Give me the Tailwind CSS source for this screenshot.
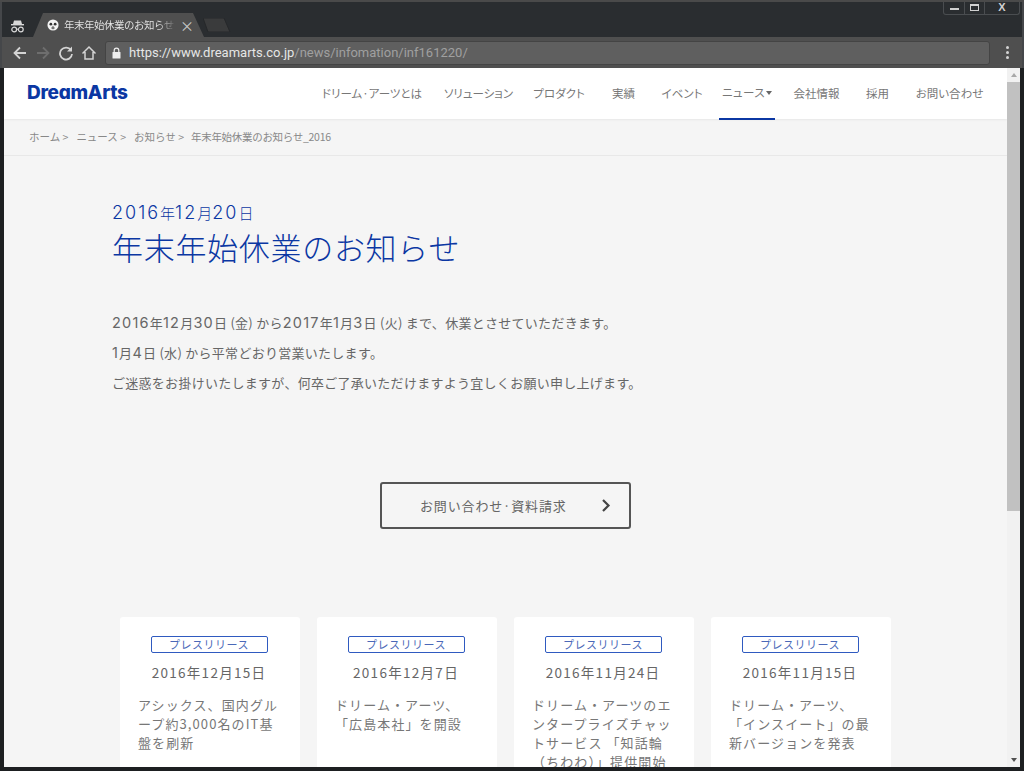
<!DOCTYPE html>
<html lang="ja">
<head>
<meta charset="utf-8">
<script src="https://cdn.jsdelivr.net/npm/@tailwindcss/browser@4"></script>
</head>
<body class="m-0 overflow-hidden">
<div class="w-[1024px] h-[771px] overflow-hidden flex flex-col bg-[#1d1f21] border-t-2 border-[#4a4a4a] font-['Noto_Sans_CJK_JP',sans-serif]">
  <!-- tab strip -->
  <div class="h-[35px] shrink-0 bg-[#2a2d30] border-x-2 border-[#45474a] flex items-end relative">
    <div class="w-[30px] h-[33px] flex items-center justify-center pl-[1px] pt-[10px]">
      <svg width="15" height="14" viewBox="0 0 15 14" fill="none"><path d="M4 1.5h7l1 3.5H3z" fill="#d8d8d8"/><rect x="1" y="5" width="13" height="1.4" fill="#d8d8d8"/><circle cx="4.2" cy="10.5" r="2.4" stroke="#d8d8d8" stroke-width="1.2"/><circle cx="10.8" cy="10.5" r="2.4" stroke="#d8d8d8" stroke-width="1.2"/><path d="M6.6 10.2h1.8" stroke="#d8d8d8"/></svg>
    </div>
    <div class="relative w-[170px] h-[24px] flex items-center text-[10.5px] text-[#e8e8e8] pl-[12px] ml-[3px]">
      <svg class="absolute left-[-7px] top-0" width="184" height="24" viewBox="0 0 184 24"><path d="M5 24L15 0H165L176 24z" fill="#4f4f4f"/></svg>
      <svg class="relative shrink-0" width="12" height="12" viewBox="0 0 14 14"><circle cx="7" cy="7" r="6.5" fill="#f4f4f4"/><circle cx="4.5" cy="6" r="1.6" fill="#333"/><circle cx="9.5" cy="6" r="1.6" fill="#333"/><path d="M5 10.5h4M7 8v4" stroke="#333" stroke-width="1"/></svg>
      <span class="relative ml-[5px] w-[110px] overflow-hidden whitespace-nowrap tracking-[-0.5px] bg-clip-text text-transparent bg-gradient-to-r from-[#e8e8e8] from-85% to-[#6a6a6a]">年末年始休業のお知らせ</span>
      <span class="relative ml-[6px] text-[14px] leading-none text-[#c8c8c8]">×</span>
    </div>
    <svg class="ml-[-2px] mb-[5px]" width="28" height="14" viewBox="0 0 28 14"><path d="M0 0H21L27 14H5z" fill="#3a3b3c" stroke="#26282a"/></svg>
    <div class="absolute right-[2px] top-[-2px] w-[77px] h-[15px] flex border border-t-0 border-[#4a4d50] rounded-b-[3px] bg-[#2a2d30]">
      <div class="w-[21px] border-r border-[#4a4d50] flex items-center justify-center pt-[3px]"><div class="w-[9px] h-[2px] bg-[#d0d0d0]"></div></div>
      <div class="w-[20px] border-r border-[#4a4d50] flex items-center justify-center"><div class="w-[9px] h-[7px] border border-t-2 border-[#d0d0d0]"></div></div>
      <div class="flex-1 flex items-center justify-center text-[11px] font-bold leading-none text-[#d0d0d0] font-['Liberation_Sans',sans-serif]">X</div>
    </div>
  </div>
  <!-- toolbar -->
  <div class="h-[31px] shrink-0 bg-[#4f4f4f] border-x-2 border-[#45474a] flex items-center">
    <div class="w-[100px] flex items-center pl-[10px] gap-[7px]">
      <svg width="16" height="16" viewBox="0 0 16 16" fill="none" stroke="#d4d4d4" stroke-width="1.8"><path d="M14 8H2.5M8 2.5L2.5 8L8 13.5"/></svg>
      <svg width="16" height="16" viewBox="0 0 16 16" fill="none" stroke="#6e6e6e" stroke-width="1.8"><path d="M2 8h11.5M8 2.5L13.5 8L8 13.5"/></svg>
      <svg width="16" height="16" viewBox="0 0 16 16" fill="none" stroke="#d4d4d4" stroke-width="1.8"><path d="M13 5.2A6 6 0 1 0 14 9"/><path d="M14 1.5v5h-5" fill="#d4d4d4" stroke="none"/></svg>
      <svg width="16" height="16" viewBox="0 0 16 16" fill="none" stroke="#d4d4d4" stroke-width="1.5"><path d="M1.5 8.5L8 2l6.5 6.5M4 7v7h8V7"/></svg>
    </div>
    <div class="ml-[3px] w-[885px] h-[24px] rounded-[3px] bg-[#5f5f5f] border border-[#444] flex items-center pl-[5px] text-[13px] whitespace-nowrap font-['Roboto',sans-serif]">
      <svg class="mr-[7px]" width="11" height="12" viewBox="0 0 11 12"><rect x="1.5" y="5" width="8" height="6.5" rx="0.5" fill="#eee"/><path d="M3.2 5V3.5a2.3 2.3 0 0 1 4.6 0V5" fill="none" stroke="#eee" stroke-width="1.2"/></svg>
      <span class="text-[#e6e6e6]">https://www.dreamarts.co.jp</span><span class="text-[#a0a0a0]">/news/infomation/inf161220/</span>
    </div>
    <div class="ml-[16px] flex flex-col gap-[2px]">
      <div class="w-[3px] h-[3px] rounded-full bg-[#d4d4d4]"></div><div class="w-[3px] h-[3px] rounded-full bg-[#d4d4d4]"></div><div class="w-[3px] h-[3px] rounded-full bg-[#d4d4d4]"></div>
    </div>
  </div>
  <!-- viewport -->
  <div class="flex-1 min-h-0 flex ml-[4px] mr-[4px] mb-[4px] bg-[#f5f5f5] overflow-hidden">
    <main class="w-[1003px] shrink-0 overflow-hidden flex flex-col">
      <header class="h-[51px] shrink-0 bg-white flex items-center justify-between pl-[23px] shadow-[0_1px_2px_rgba(0,0,0,0.06)] relative">
        <div class="text-[#0b37a3] text-[19px] font-extrabold tracking-[-0.3px] leading-none font-['Inter',sans-serif] [font-feature-settings:'cv11'] -mt-[2px]">DreamArts</div>
        <nav class="flex items-center h-full text-[11.5px] text-[#777] whitespace-nowrap [font-feature-settings:'palt'] mr-[5px]">
          <a class="w-[118px] text-center">ドリーム·アーツとは</a>
          <a class="w-[95px] text-center">ソリューション</a>
          <a class="w-[66px] text-center">プロダクト</a>
          <a class="w-[63px] text-center">実績</a>
          <a class="w-[54px] text-center">イベント</a>
          <a class="ml-[10px] w-[56px] h-full flex items-center justify-center border-b-[2px] border-[#0b37a3] mt-[1px] tracking-[0.4px]">ニュース<span class="ml-[1px] w-0 h-0 border-x-[3px] border-x-transparent border-t-[4px] border-t-[#666]"></span></a>
          <a class="w-[83px] text-center">会社情報</a>
          <a class="w-[39px] text-center">採用</a>
          <a class="w-[105px] text-center">お問い合わせ</a>
        </nav>
      </header>
      <div class="h-[37px] shrink-0 border-b border-[#e8e8e8] flex items-center pl-[25px] text-[10.5px] text-[#888] whitespace-nowrap gap-[5px]">
        <span>ホーム &gt;</span><span class="ml-[3px]">ニュース &gt;</span><span class="ml-[3px]">お知らせ &gt;</span><span class="ml-[2px] tracking-[-0.3px]">年末年始休業のお知らせ_2016</span>
      </div>
      <section class="pl-[108px] pt-[45px] text-[#0b37a3]">
        <p class="text-[15px] leading-[24px] font-light whitespace-nowrap"><span class="font-['Inter'] text-[18px] tracking-[2px]">2016</span>年<span class="font-['Inter'] text-[18px] tracking-[2px]">12</span>月<span class="font-['Inter'] text-[18px] tracking-[2px]">20</span>日</p>
        <h1 class="text-[31px] leading-[44px] font-light tracking-[0.7px]">年末年始休業のお知らせ</h1>
      </section>
      <section class="pl-[108px] pt-[39px] text-[13px] leading-[30px] text-[#666] tracking-[0.28px] whitespace-nowrap">
        <p><span class="font-['Inter'] text-[14.5px] tracking-[1.2px]">2016</span>年<span class="font-['Inter'] text-[14.5px] tracking-[1.2px]">12</span>月<span class="font-['Inter'] text-[14.5px] tracking-[1.2px]">30</span>日 (金) から<span class="font-['Inter'] text-[14.5px] tracking-[1.2px]">2017</span>年<span class="font-['Inter'] text-[14.5px] tracking-[1.2px]">1</span>月<span class="font-['Inter'] text-[14.5px] tracking-[1.2px]">3</span>日 (火) まで、休業とさせていただきます。</p>
        <p><span class="font-['Inter'] text-[14.5px] tracking-[1.2px]">1</span>月<span class="font-['Inter'] text-[14.5px] tracking-[1.2px]">4</span>日 (水) から平常どおり営業いたします。</p>
        <p>ご迷惑をお掛けいたしますが、何卒ご了承いただけますよう宜しくお願い申し上げます。</p>
      </section>
      <div class="pl-[376px] pt-[84px]">
        <a class="w-[251px] h-[47px] border-2 border-[#555] rounded-[3px] flex items-center text-[13px] tracking-[0.85px] text-[#666] pl-[38px] relative">お問い合わせ·資料請求
          <svg class="absolute right-[18px] top-[14px]" width="10" height="15" viewBox="0 0 10 15" fill="none" stroke="#444" stroke-width="2.2"><path d="M2 2l5.5 5.5L2 13"/></svg>
        </a>
      </div>
      <section class="pl-[116px] pt-[88px] flex gap-[17px] items-start">
        <article class="w-[180px] h-[200px] shrink-0 bg-white rounded-[3px] pt-[19px] pl-[18px] pr-[20px] text-[#777]">
          <div class="w-[117px] mx-auto h-[17px] border border-[#2f5ac0] rounded-[2px] text-[11px] leading-[15px] text-center text-[#4a68b8] tracking-[0.5px] mb-[10px]">プレスリリース</div>
          <p class="text-center text-[13.5px] leading-[19px] tracking-[1.3px] text-[#666] whitespace-nowrap">2016年12月15日</p>
          <p class="text-[13px] leading-[19px] mt-[13px] tracking-[1.1px]">アシックス、国内グループ約3,000名のIT基盤を刷新</p>
        </article>
        <article class="w-[180px] h-[200px] shrink-0 bg-white rounded-[3px] pt-[19px] pl-[18px] pr-[20px] text-[#777]">
          <div class="w-[117px] mx-auto h-[17px] border border-[#2f5ac0] rounded-[2px] text-[11px] leading-[15px] text-center text-[#4a68b8] tracking-[0.5px] mb-[10px]">プレスリリース</div>
          <p class="text-center text-[13.5px] leading-[19px] tracking-[1.3px] text-[#666] whitespace-nowrap">2016年12月7日</p>
          <p class="text-[13px] leading-[19px] mt-[13px] tracking-[1.1px]">ドリーム・アーツ、<br>「広島本社」を開設</p>
        </article>
        <article class="w-[180px] h-[200px] shrink-0 bg-white rounded-[3px] pt-[19px] pl-[18px] pr-[20px] text-[#777]">
          <div class="w-[117px] mx-auto h-[17px] border border-[#2f5ac0] rounded-[2px] text-[11px] leading-[15px] text-center text-[#4a68b8] tracking-[0.5px] mb-[10px]">プレスリリース</div>
          <p class="text-center text-[13.5px] leading-[19px] tracking-[1.3px] text-[#666] whitespace-nowrap">2016年11月24日</p>
          <p class="text-[13px] leading-[19px] mt-[13px] tracking-[1.1px]">ドリーム・アーツのエンタープライズチャットサービス 「知話輪（ちわわ）」提供開始</p>
        </article>
        <article class="w-[180px] h-[200px] shrink-0 bg-white rounded-[3px] pt-[19px] pl-[18px] pr-[20px] text-[#777]">
          <div class="w-[117px] mx-auto h-[17px] border border-[#2f5ac0] rounded-[2px] text-[11px] leading-[15px] text-center text-[#4a68b8] tracking-[0.5px] mb-[10px]">プレスリリース</div>
          <p class="text-center text-[13.5px] leading-[19px] tracking-[1.3px] text-[#666] whitespace-nowrap">2016年11月15日</p>
          <p class="text-[13px] leading-[19px] mt-[13px] tracking-[1.1px]">ドリーム・アーツ、<br>「インスイート」の最新バージョンを発表</p>
        </article>
      </section>
    </main>
    <!-- scrollbar -->
    <aside class="w-[13px] shrink-0 bg-[#f1f1f1] flex flex-col items-center">
      <div class="h-[14px] shrink-0 flex items-center justify-center"><div class="w-0 h-0 border-x-[3.5px] border-x-transparent border-b-[4px] border-b-[#a8a8a8]"></div></div>
      <div class="w-full h-[429px] shrink-0 bg-[#c1c1c1]"></div>
      <div class="flex-1"></div>
      <div class="h-[14px] shrink-0 flex items-center justify-center"><div class="w-0 h-0 border-x-[3.5px] border-x-transparent border-t-[4px] border-t-[#505050]"></div></div>
    </aside>
  </div>
</div>
</body>
</html>
